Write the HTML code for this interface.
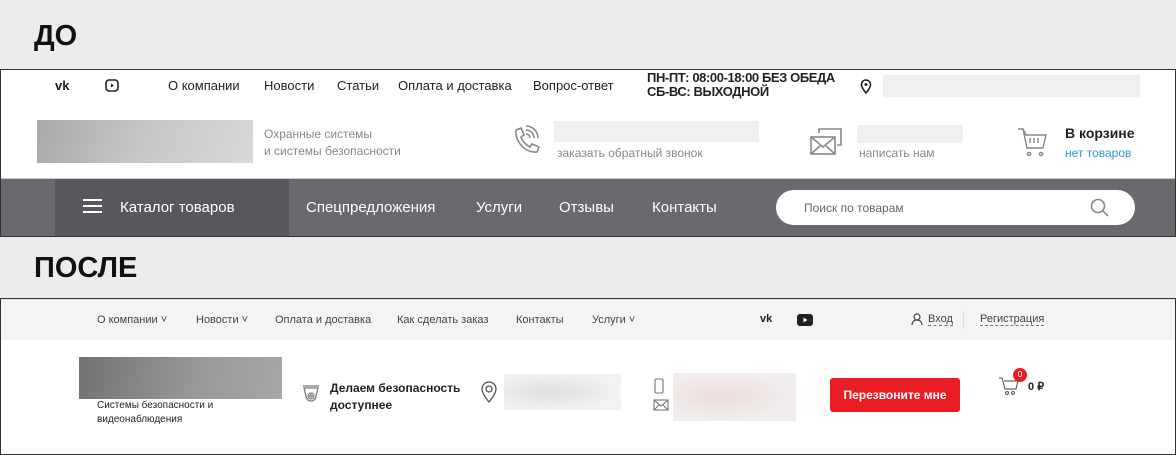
<!DOCTYPE html>
<html><head><meta charset="utf-8"><style>
*{margin:0;padding:0;box-sizing:border-box}
body{width:1176px;height:455px;background:#ececec;font-family:"Liberation Sans",sans-serif;position:relative;overflow:hidden;color:#222}
.a{position:absolute;white-space:nowrap}
.h{font-weight:bold;font-size:29px;color:#111;letter-spacing:0px}
</style></head><body>
<div class="a h" style="left:34px;top:20px">ДО</div>
<div class="a" style="left:0;top:69px;width:1176px;height:168px;border:1px solid #333;background:#fff"></div>
<div class="a" style="left:1px;top:178px;width:1174px;height:58px;background:#69696e;border-top:1px solid #ccc"></div>
<div class="a" style="left:55px;top:179px;width:234px;height:57px;background:#57575e"></div>
<div class="a" style="left:55px;top:78px;font-weight:bold;font-size:13px">vk</div>
<svg class="a" style="left:105px;top:79px" width="14" height="13"><rect x="1" y="1" width="12" height="11" rx="3" fill="none" stroke="#222" stroke-width="1.6"/><path d="M6 4.5v4l3-2z" fill="#222"/></svg>
<div class="a" style="left:168px;top:78px;font-size:13px">О компании</div>
<div class="a" style="left:264px;top:78px;font-size:13px">Новости</div>
<div class="a" style="left:337px;top:78px;font-size:13px">Статьи</div>
<div class="a" style="left:398px;top:78px;font-size:13px">Оплата и доставка</div>
<div class="a" style="left:533px;top:78px;font-size:13px">Вопрос-ответ</div>
<div class="a" style="left:647px;top:71px;font-size:13px;font-weight:bold;line-height:14px;letter-spacing:-0.4px">ПН-ПТ: 08:00-18:00 БЕЗ ОБЕДА<br>СБ-ВС: ВЫХОДНОЙ</div>
<svg class="a" style="left:860px;top:79px" width="12" height="15"><path d="M6 1a4.5 4.5 0 0 0-4.5 4.5C1.5 9 6 14 6 14s4.5-5 4.5-8.5A4.5 4.5 0 0 0 6 1z" fill="none" stroke="#222" stroke-width="1.6"/><circle cx="6" cy="5.5" r="1.5" fill="#222"/></svg>
<div class="a" style="left:883px;top:75px;width:257px;height:22px;background:#f0f0f0"></div>
<div class="a" style="left:37px;top:120px;width:216px;height:43px;background:linear-gradient(110deg,#a9a7a7,#c8c6c6,#d8d8d8)"></div>
<div class="a" style="left:264px;top:126px;font-size:12px;color:#888;line-height:17px">Охранные системы<br>и системы безопасности</div>
<svg class="a" style="left:508px;top:124px" width="36" height="36" fill="none" stroke="#888" stroke-width="1.6"><path d="M8 6l5-2 3 7-3 2c2 5 5 8 9 10l2-3 7 3-2 5c-12 1-22-10-21-22z"/><path d="M18 6a8 8 0 0 1 8 8M18 2a12 12 0 0 1 12 12M18 10a4 4 0 0 1 4 4"/></svg>
<div class="a" style="left:554px;top:121px;width:205px;height:21px;background:#f0f0f0"></div>
<div class="a" style="left:557px;top:146px;font-size:12px;color:#888">заказать обратный звонок</div>
<svg class="a" style="left:809px;top:127px" width="34" height="30" fill="none" stroke="#888" stroke-width="1.6"><rect x="2" y="10" width="24" height="17"/><path d="M2 10l12 10 12-10M2 27l9-8M26 27l-9-8M10 6V2h22v16h-4"/></svg>
<div class="a" style="left:857px;top:125px;width:106px;height:18px;background:#f0f0f0"></div>
<div class="a" style="left:859px;top:146px;font-size:12px;color:#888">написать нам</div>
<svg class="a" style="left:1017px;top:126px" width="32" height="32" fill="none" stroke="#888" stroke-width="1.4"><path d="M1 3h5l3 6h20l-3 13H10L6 3"/><path d="M13 12v5M17 12v5M21 12v5"/><circle cx="12" cy="28" r="1.6"/><circle cx="24" cy="28" r="1.6"/></svg>
<div class="a" style="left:1065px;top:125px;font-size:14px;font-weight:bold">В корзине</div>
<div class="a" style="left:1065px;top:146px;font-size:12px;color:#2a9ad8">нет товаров</div>
<div class="a" style="left:83px;top:199px;width:19px;height:2px;background:#fff;box-shadow:0 6px #fff,0 12px #fff"></div>
<div class="a" style="left:120px;top:199px;font-size:15px;color:#fff">Каталог товаров</div>
<div class="a" style="left:306px;top:199px;font-size:15px;color:#fff">Спецпредложения</div>
<div class="a" style="left:476px;top:199px;font-size:15px;color:#fff">Услуги</div>
<div class="a" style="left:559px;top:199px;font-size:15px;color:#fff">Отзывы</div>
<div class="a" style="left:652px;top:199px;font-size:15px;color:#fff">Контакты</div>
<div class="a" style="left:776px;top:190px;width:359px;height:35px;background:#fff;border-radius:18px"></div>
<div class="a" style="left:804px;top:201px;font-size:12px;color:#666">Поиск по товарам</div>
<svg class="a" style="left:1090px;top:198px" width="19" height="19" fill="none" stroke="#888" stroke-width="1.6"><circle cx="8" cy="8" r="6.5"/><path d="M13 13l5 5"/></svg>

<div class="a h" style="left:34px;top:252px">ПОСЛЕ</div>
<div class="a" style="left:0;top:298px;width:1176px;height:157px;border:1px solid #333;background:#fff"></div>
<div class="a" style="left:1px;top:299px;width:1174px;height:41px;background:#f4f4f4;border-top:1px solid #f0e0c8"></div>
<div class="a" style="left:97px;top:314px;font-size:11px;color:#444">О компании ˅</div>
<div class="a" style="left:196px;top:314px;font-size:11px;color:#444">Новости ˅</div>
<div class="a" style="left:275px;top:314px;font-size:11px;color:#444">Оплата и доставка</div>
<div class="a" style="left:397px;top:314px;font-size:11px;color:#444">Как сделать заказ</div>
<div class="a" style="left:516px;top:314px;font-size:11px;color:#444">Контакты</div>
<div class="a" style="left:592px;top:314px;font-size:11px;color:#444">Услуги ˅</div>
<div class="a" style="left:760px;top:313px;font-size:11px;font-weight:bold">vk</div>
<svg class="a" style="left:797px;top:314px" width="16" height="12"><rect width="16" height="12" rx="3" fill="#222"/><path d="M6.5 3.5v5l4-2.5z" fill="#fff"/></svg>
<svg class="a" style="left:911px;top:313px" width="12" height="13" fill="none" stroke="#444" stroke-width="1.2"><circle cx="6" cy="4" r="3"/><path d="M1 12c0-3 2-5 5-5s5 2 5 5"/></svg>
<div class="a" style="left:928px;top:313px;font-size:11px;color:#444;border-bottom:1px dashed #777">Вход</div>
<div class="a" style="left:963px;top:311px;width:1px;height:18px;background:#ddd"></div>
<div class="a" style="left:980px;top:313px;font-size:11px;color:#444;border-bottom:1px dashed #777">Регистрация</div>
<div class="a" style="left:79px;top:357px;width:203px;height:42px;background:linear-gradient(100deg,#737272,#9a9898 60%,#a8a6a6)"></div>
<div class="a" style="left:97px;top:399px;font-size:10px;line-height:14px;color:#222">Системы безопасности и<br>видеонаблюдения</div>
<svg class="a" style="left:302px;top:385px" width="18" height="18" fill="none" stroke="#777" stroke-width="1.2"><path d="M1 1h16M2 3h14l-2 8a5 5 0 0 1-10 0z"/><circle cx="9" cy="11" r="3"/><circle cx="9" cy="11" r="1.2"/></svg>
<div class="a" style="left:330px;top:380px;font-size:12px;font-weight:bold;line-height:17px">Делаем безопасность<br>доступнее</div>
<svg class="a" style="left:481px;top:381px" width="16" height="22" fill="none" stroke="#555" stroke-width="1.3"><path d="M8 1a7 7 0 0 0-7 7c0 5 7 13 7 13s7-8 7-13a7 7 0 0 0-7-7z"/><circle cx="8" cy="8" r="3"/></svg>
<div class="a" style="left:504px;top:374px;width:117px;height:36px;background:radial-gradient(ellipse at 40% 50%,#dedede,#f2f2f2 70%)"></div>
<svg class="a" style="left:653px;top:378px" width="16" height="38" fill="none" stroke="#777" stroke-width="1.1"><rect x="2" y="1" width="8" height="14" rx="1.5"/><rect x="1" y="22" width="14" height="10"/><path d="M1 22l7 6 7-6M1 32l5-5M15 32l-5-5"/></svg>
<div class="a" style="left:673px;top:373px;width:123px;height:48px;background:radial-gradient(ellipse at 40% 50%,#ecdcdc,#f2eeee 70%)"></div>
<div class="a" style="left:830px;top:378px;width:130px;height:34px;background:#ec1c24;border-radius:3px;color:#fff;font-size:12px;font-weight:bold;text-align:center;line-height:34px">Перезвоните мне</div>
<svg class="a" style="left:998px;top:376px" width="22" height="20" fill="none" stroke="#666" stroke-width="1.2"><path d="M1 2h3l3 11h11l2-8H6"/><circle cx="9" cy="17" r="1.5"/><circle cx="15" cy="17" r="1.5"/></svg>
<div class="a" style="left:1013px;top:368px;width:14px;height:14px;border-radius:50%;background:#ec1c24;color:#fff;font-size:8px;text-align:center;line-height:14px">0</div>
<div class="a" style="left:1028px;top:380px;font-size:11px;font-weight:bold">0 ₽</div>
</body></html>
